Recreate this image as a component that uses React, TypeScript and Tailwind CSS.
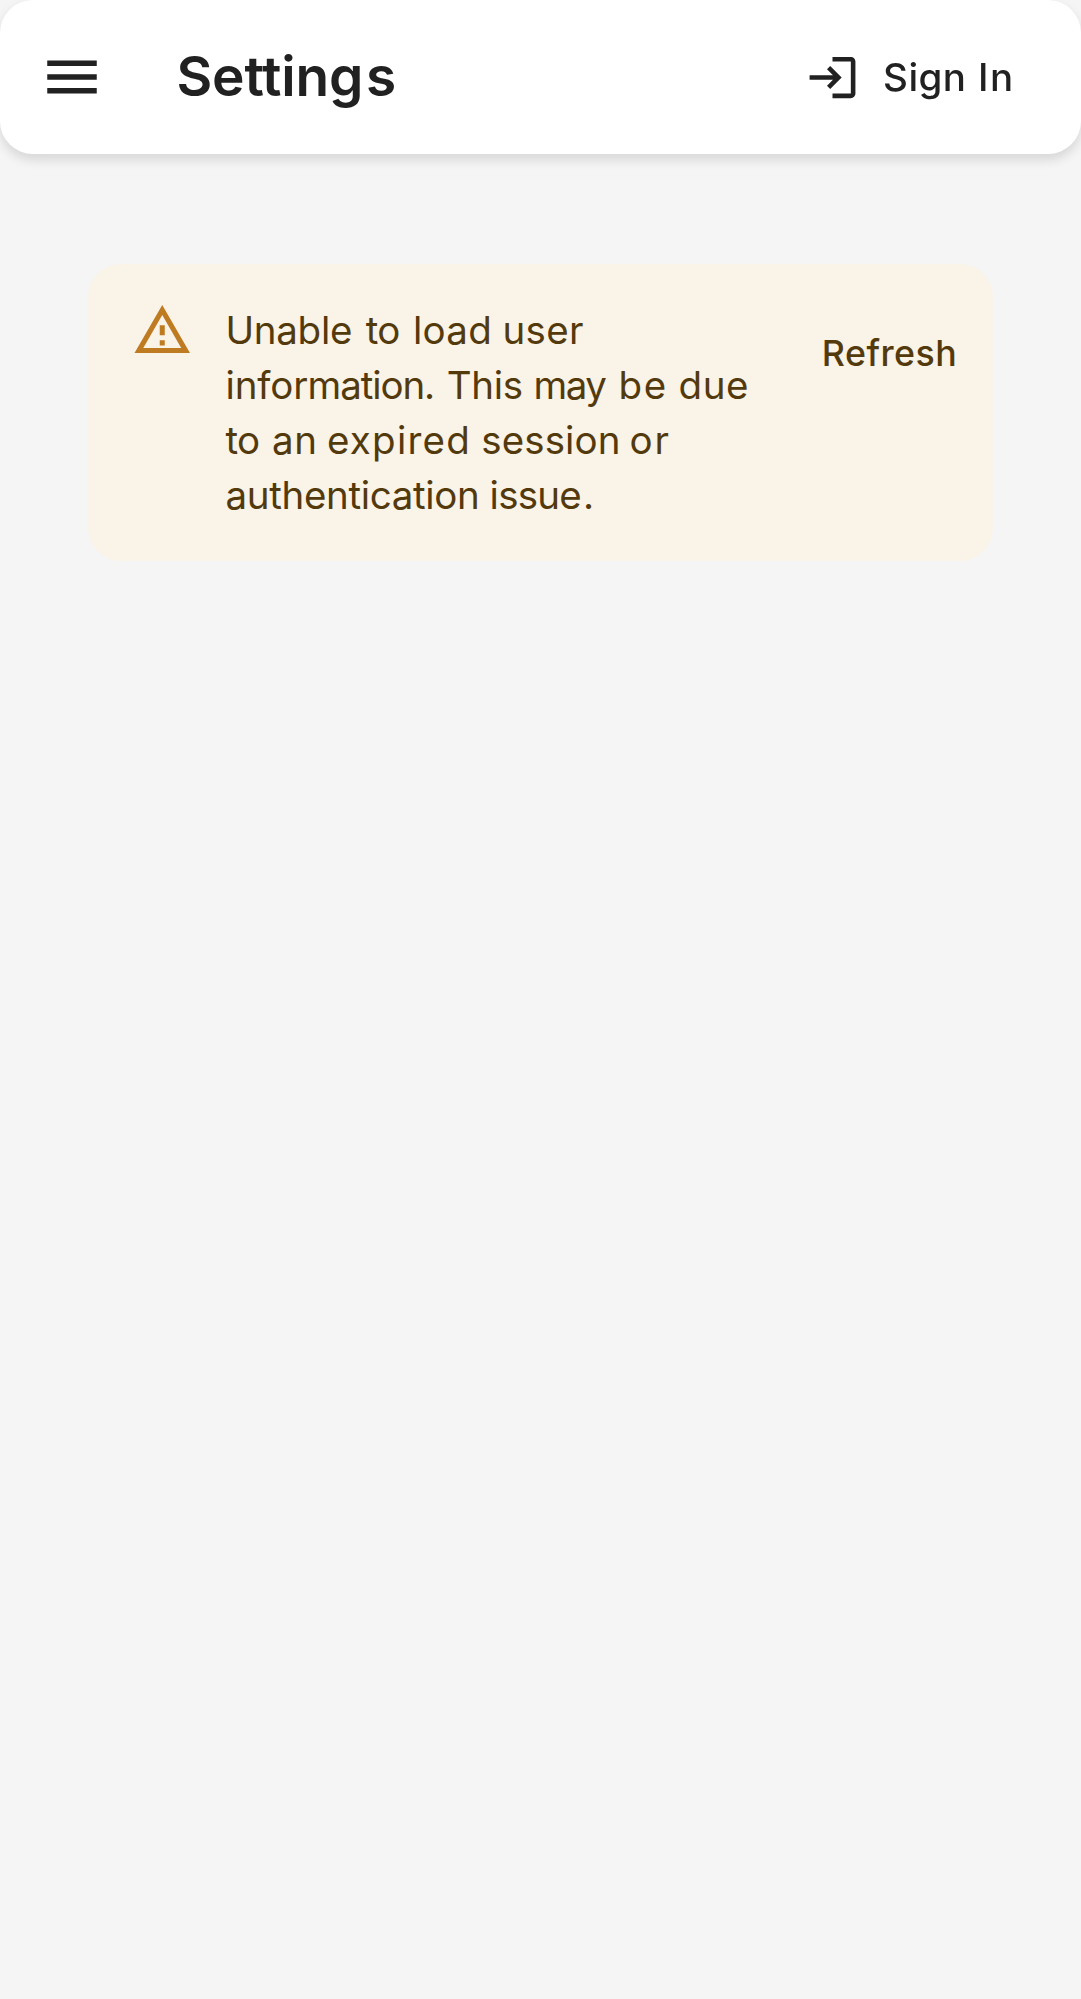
import React from "react";

function MenuIcon() {
  return (
    <svg viewBox="0 0 24 24" className="size-[66px] shrink-0 fill-current" aria-hidden="true">
      <path d="M3 18h18v-2H3zm0-5h18v-2H3zm0-7v2h18V6z" />
    </svg>
  );
}

function LoginIcon() {
  return (
    <svg viewBox="0 0 24 24" className="size-[55px] shrink-0 fill-current" aria-hidden="true">
      <path d="M11 7 9.6 8.4l2.6 2.6H2v2h10.2l-2.6 2.6L11 17l5-5zm9 12h-8v2h8c1.1 0 2-.9 2-2V5c0-1.1-.9-2-2-2h-8v2h8z" />
    </svg>
  );
}

function WarningIcon() {
  return (
    <svg viewBox="0 0 24 24" className="size-[60.5px] shrink-0 fill-current" aria-hidden="true">
      <path d="M12 5.99L19.53 19H4.47L12 5.99M12 2L1 21h22L12 2zm1 14h-2v2h2v-2zm0-6h-2v4h2v-4z" />
    </svg>
  );
}

function Header() {
  return (
    <header className="flex h-[154px] items-center rounded-[33px] bg-white pl-[38.5px] text-[#212121] shadow-[0_5.5px_11px_rgba(0,0,0,0.12)] will-change-transform">
      <button aria-label="Open menu">
        <MenuIcon />
      </button>
      <h1 className="ml-[72px] grow pb-0.5 text-[55px] leading-[88px] font-semibold">
        <span className="inline-block w-[189.5px] tracking-[-0.15px]">Setting</span>s
      </h1>
      <button className="mr-[67.4px] flex shrink-0 items-center gap-[23px] text-left text-[38.5px] leading-[66px] font-medium">
        <LoginIcon />
        <span className="flex">
          <span className="w-[95px] shrink-0 tracking-[0.4px]">Sign</span>{" "}
          <span className="w-[35.5px] shrink-0 tracking-[1.5px]">In</span>
        </span>
      </button>
    </header>
  );
}

function SessionAlert() {
  return (
    <div role="alert" className="flex h-[297px] rounded-[33px] bg-[#faf3e7] px-11 py-[16.5px] text-[#533a0d]">
      <div className="mr-[33px] py-[19.25px] text-[#bf7b22]">
        <WarningIcon />
      </div>
      <p className="grow py-[22px] text-[38.5px] leading-[55px] whitespace-nowrap">
        <span className="flex">
          <span className="w-[140.3px] tracking-[-0.3px]">Unable</span>{" "}
          <span className="w-[47.2px] tracking-[-0.8px]">to</span>{" "}
          <span className="w-[89.5px] tracking-[0.3px]">load</span>{" "}
          <span className="tracking-[0.35px]">user</span>
        </span>
        <span className="flex">
          <span className="w-[221.2px] tracking-[-0.15px]">
            infor<span className="tracking-[-1.1px]">mation.</span>
          </span>{" "}
          <span className="w-[86.7px] tracking-[-0.3px]">This</span>{" "}
          <span className="w-[85.2px] tracking-[-1.4px]">may</span>{" "}
          <span className="w-[59.9px] tracking-[1.6px]">be</span>{" "}
          <span className="tracking-[0.6px]">due</span>
        </span>
        <span className="flex">
          <span className="w-[46.5px] tracking-[-0.8px]">to</span>{" "}
          <span className="w-[55px] tracking-[0.6px]">an</span>{" "}
          <span className="w-[154.2px] tracking-[1.25px]">expired</span>{" "}
          <span className="w-[148.3px] tracking-[0.12px]">session</span>{" "}
          <span className="tracking-[2px]">or</span>
        </span>
        <span className="flex">
          <span className="w-[264.1px] tracking-[-0.33px]">authentication</span>{" "}
          <span className="tracking-[-0.75px]">
            issue<span className="pl-0.5">.</span>
          </span>
        </span>
      </p>
      <div className="-mr-[8px] pt-3">
        <button className="h-[121px] w-[135.3px] text-left text-[35.75px] leading-[62.5px] font-medium tracking-[0.5px]">
          Refresh
        </button>
      </div>
    </div>
  );
}

export default function App() {
  return (
    <div className="min-h-[1999px] w-full bg-[#f5f5f5] font-['Inter',sans-serif]">
      <Header />
      <main className="px-[88px] pt-[110px]">
        <SessionAlert />
      </main>
    </div>
  );
}
